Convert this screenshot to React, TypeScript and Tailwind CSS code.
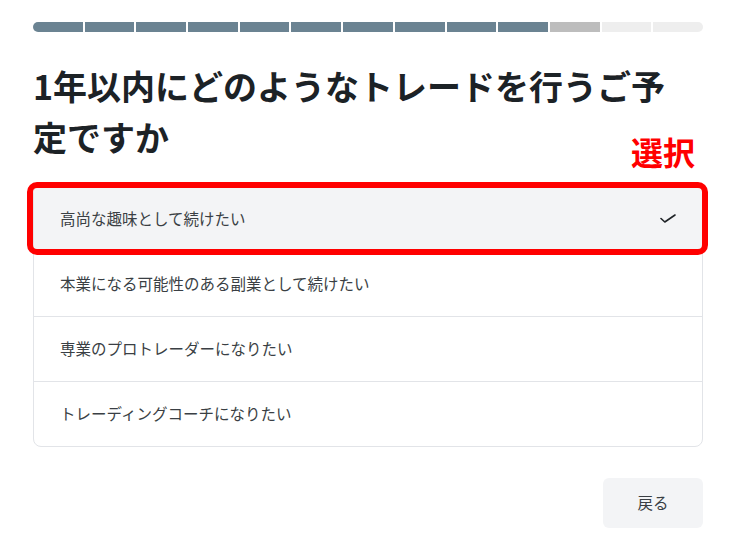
const steps = [
  'done', 'done', 'done', 'done', 'done', 'done', 'done', 'done', 'done', 'done',
  'current', 'todo', 'todo',
]

const options = [
  '高尚な趣味として続けたい',
  '本業になる可能性のある副業として続けたい',
  '専業のプロトレーダーになりたい',
  'トレーディングコーチになりたい',
]

function ProgressBar() {
  return (
    <div className="flex h-[10px] w-full gap-[2px] overflow-hidden rounded-full">
      {steps.map((s, i) => (
        <div
          key={i}
          className={
            s === 'done'
              ? 'flex-1 bg-[#6b8392]'
              : s === 'current'
                ? 'flex-1 bg-[#bdbdbd]'
                : 'flex-1 bg-[#eeeeee]'
          }
        />
      ))}
    </div>
  )
}

function CheckMark() {
  return (
    <svg width="16" height="10" viewBox="0 0 16 10" fill="none" className="mr-[26px]">
      <polyline points="1,4.5 4.8,8 15,1" stroke="#1f2327" strokeWidth="1.6" strokeLinecap="round" strokeLinejoin="round" />
    </svg>
  )
}

export default function App() {
  return (
    <div
      className="min-h-[541px] w-[738px] bg-white"
      style={{ fontFamily: '"Noto Sans CJK JP", "Noto Sans", sans-serif' }}
    >
      <div className="ml-[33px] w-[670px] pt-[22px]">
        <ProgressBar />

        <div className="relative pt-[28px]">
          <h1 className="flex flex-col items-start text-[34px] font-bold leading-[51px] text-[#1c2226]">
            <span>1年以内にどのようなトレードを行うご予</span>
            <span>定ですか</span>
          </h1>
          <span className="absolute right-[8px] top-[103px] z-10 text-[32px] font-bold leading-none text-[#ff0000]">
            選択
          </span>
        </div>

        <div className="mt-[23px] rounded-lg border border-[#e2e4e8]">
          {options.map((label, i) => (
            <div
              key={label}
              className={
                i === 0
                  ? 'relative flex h-[65px] items-center justify-between rounded-t-lg bg-[#f3f4f6] pl-[26px]'
                  : 'flex h-[65px] items-center border-t border-[#e2e4e8] pl-[26px]'
              }
            >
              <span className="text-[15.5px] text-[#3a3f44]">{label}</span>
              {i === 0 && (
                <>
                  <CheckMark />
                  <div className="absolute -bottom-[4px] -left-[7px] -right-[6px] -top-[4px] rounded-[10px] border-[6px] border-[#ff0000]" />
                </>
              )}
            </div>
          ))}
        </div>

        <div className="mt-[31px] flex justify-end">
          <button
            type="button"
            className="flex h-[50px] w-[100px] items-center justify-center rounded-md bg-[#f3f4f6] text-[15.5px] text-[#3a3f44]"
          >
            戻る
          </button>
        </div>
      </div>
    </div>
  )
}
